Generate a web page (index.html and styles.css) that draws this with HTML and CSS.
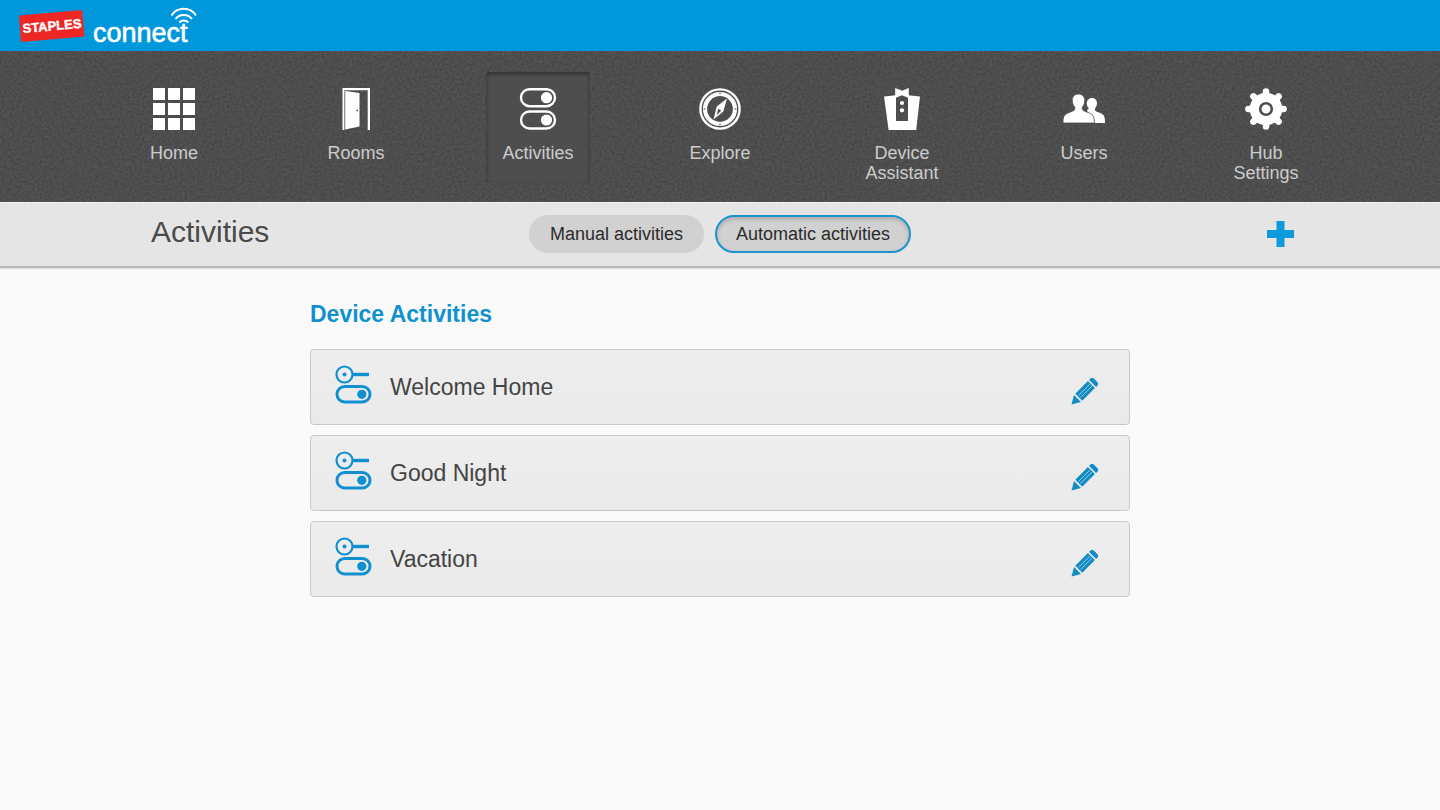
FILE: index.html
```html
<!DOCTYPE html>
<html lang="en">
<head>
    <meta charset="UTF-8">
    <meta name="viewport" content="width=device-width, initial-scale=1.0">
    <title>Staples Connect - Activities</title>
    <link rel="stylesheet" href="styles.css">
</head>
<body>

    <!-- shared icons -->
    <svg class="sprite" width="0" height="0" aria-hidden="true">
        <symbol id="icon-rule" viewBox="0 0 38 40">
            <circle cx="9.500" cy="10.500" r="8" fill="none" stroke="currentColor" stroke-width="2.200"/>
            <circle cx="9.500" cy="10.500" r="2"/>
            <path d="M17.500 8.800h16.500v3.400H17.500z"/>
            <rect x="2" y="22.500" width="33" height="15.500" rx="7.700" fill="none" stroke="currentColor" stroke-width="3"/>
            <circle cx="26.800" cy="30.300" r="4.600"/>
        </symbol>
        <symbol id="icon-pencil" viewBox="0 0 28 28">
            <path d="M0.500 27.500l2.500-9.500 7 7z"/>
            <path d="M4.300 16.700L16.900 4.100l7 7-12.600 12.600z"/>
            <path d="M18.100 2.900l1.600-1.600q1.400-1.200 2.900 0l4.100 4.100q1.200 1.400 0 2.900l-1.600 1.600z"/>
            <path d="M7.500 18.500L19 7M9.500 20.500L21 9" fill="none" stroke="#8cc8e8" stroke-width="1"/>
        </symbol>
    </svg>

    <header class="top-bar">
        <a class="logo" href="#" aria-label="Staples Connect">
            <svg width="200" height="51" viewBox="0 0 200 51">
                <path d="M19 15.500L82 10l2.500 26.500L21 42z" fill="#ee2724"/>
                <text class="logo-staples" x="23" y="33" transform="rotate(-5 23 33)">STAPLES</text>
                <text class="logo-connect" x="93" y="42">connect</text>
                <g fill="none" stroke="#fff" stroke-width="2">
                    <path d="M171.500 15.500a14.500 14.500 0 0 1 24.500 0"/>
                    <path d="M175.500 19a10.500 10.500 0 0 1 16.500 0"/>
                    <path d="M179.300 22.500a6 6 0 0 1 9 0"/>
                </g>
            </svg>
        </a>
    </header>

    <nav class="main-nav">
        <svg class="grain" aria-hidden="true">
            <filter id="noise">
                <feTurbulence type="fractalNoise" baseFrequency="0.4" numOctaves="2"/>
                <feColorMatrix values="0 0 0 0 0  0 0 0 0 0  0 0 0 0 0  0.35 0 0 0 -0.1"/>
            </filter>
            <rect width="100%" height="100%" filter="url(#noise)"/>
        </svg>
        <ul class="nav-list">
            <li>
                <a href="#">
                    <svg viewBox="0 0 42 42">
                        <path d="M0 0h12v12H0zM15 0h12v12H15zM30 0h12v12H30zM0 15h12v12H0zM15 15h12v12H15zM30 15h12v12H30zM0 30h12v12H0zM15 30h12v12H15zM30 30h12v12H30z"/>
                    </svg>
                    <span>Home</span>
                </a>
            </li>
            <li>
                <a href="#">
                    <svg viewBox="0 0 42 42">
                        <path d="M7.500 0h27.500v42h-2.300V2.200H9.400V42H7.500z"/>
                        <path fill-rule="evenodd" d="M10.200 3L24.500 5v33.500l-14.300 2.900zM21.400 22.500a.8 1.100 0 1 0 1.600 0a.8 1.100 0 1 0-1.600 0z"/>
                    </svg>
                    <span>Rooms</span>
                </a>
            </li>
            <li>
                <a class="active" href="#" aria-current="page">
                    <svg viewBox="0 0 42 42">
                        <rect x="4" y="1.200" width="34" height="17" rx="8.500" fill="none" stroke="#fff" stroke-width="2.400"/>
                        <circle cx="29.500" cy="9.700" r="5.600"/>
                        <rect x="4" y="23.500" width="34" height="17" rx="8.500" fill="none" stroke="#fff" stroke-width="2.400"/>
                        <circle cx="29.500" cy="32" r="5.600"/>
                    </svg>
                    <span>Activities</span>
                </a>
            </li>
            <li>
                <a href="#">
                    <svg viewBox="0 0 42 42">
                        <circle cx="21" cy="21" r="19.600" fill="none" stroke="#fff" stroke-width="2.400"/>
                        <circle cx="21" cy="21" r="15" fill="none" stroke="#fff" stroke-width="4.200"/>
                        <path d="M21 4.500v2M21 35.500v2M4.500 21h2M35.500 21h2" stroke="#4d4d4d"/>
                        <path fill-rule="evenodd" d="M28 10.500L24.300 23.500 14.500 31.500l3.200-13zM19.300 20.500l-1.600 6.500 4.500-4.200z"/>
                    </svg>
                    <span>Explore</span>
                </a>
            </li>
            <li>
                <a href="#">
                    <svg viewBox="0 0 42 42">
                        <path d="M3 8.500l12-1.200v25.700h12v-25.700L39 8.500 35.200 42H7.600z"/>
                        <path d="M14.200 0L21 2.800 27.800 0v10L21 7.200 14.200 10z"/>
                        <circle cx="21" cy="15" r="2.100"/>
                        <circle cx="21" cy="22.300" r="2.100"/>
                    </svg>
                    <span>Device<br>Assistant</span>
                </a>
            </li>
            <li>
                <a href="#">
                    <svg viewBox="0 0 42 42">
                        <path d="M29 10c3.300 0 5.200 2.500 5 5.600-.2 2.400-1 3.800-2 4.800v2c1 1.800 8.500 2 9.500 6.600.4 2 .5 4 .5 6H28l-4-13 2-1.700c-1.400-1.200-2.200-3-2.200-4.900 0-3 2-5.400 5.200-5.400z"/>
                        <path d="M15.500 6c4.200 0 6.500 3 6.200 7-.2 2.800-1 4.700-2.400 6v2.500c1.300 2.500 9.700 2.700 11.400 7.500.5 1.700.7 4.200.7 6H0c0-2 0-4.300.6-6 1.800-4.800 9.800-5 11.200-7.500v-2.500c-1.400-1.300-2.300-3.200-2.500-6-.3-4 2-7 6.200-7z" stroke="#4d4d4d" stroke-width=".8"/>
                    </svg>
                    <span>Users</span>
                </a>
            </li>
            <li>
                <a href="#">
                    <svg viewBox="0 0 42 42">
                        <circle cx="21" cy="21" r="16.300"/>
                        <g stroke="#fff" stroke-width="6.500" stroke-linecap="round">
                            <path d="M21 3.400v35.200M3.400 21h35.200M8.400 8.400l25.200 25.200M33.600 8.400L8.400 33.600"/>
                        </g>
                        <circle cx="21" cy="21" r="5.800" stroke="#4d4d4d" stroke-width="2.600"/>
                    </svg>
                    <span>Hub<br>Settings</span>
                </a>
            </li>
        </ul>
    </nav>

    <div class="sub-bar">
        <div class="sub-inner">
            <h1>Activities</h1>
            <div class="filters">
                <button type="button" class="pill">Manual activities</button>
                <button type="button" class="pill selected" aria-pressed="true">Automatic activities</button>
            </div>
            <button type="button" class="add-btn" aria-label="Add activity">
                <svg width="27" height="26" viewBox="0 0 27 26">
                    <path d="M9.500 0h8v9H27v8h-9.500v9h-8v-9H0V9h9.500z"/>
                </svg>
            </button>
        </div>
    </div>

    <main class="content">
        <h2>Device Activities</h2>
        <ul class="activity-list">
            <li class="activity">
                <svg class="rule-icon"><use href="#icon-rule"/></svg>
                <span class="name">Welcome Home</span>
                <button type="button" class="edit-btn" aria-label="Edit Welcome Home"><svg><use href="#icon-pencil"/></svg></button>
            </li>
            <li class="activity">
                <svg class="rule-icon"><use href="#icon-rule"/></svg>
                <span class="name">Good Night</span>
                <button type="button" class="edit-btn" aria-label="Edit Good Night"><svg><use href="#icon-pencil"/></svg></button>
            </li>
            <li class="activity">
                <svg class="rule-icon"><use href="#icon-rule"/></svg>
                <span class="name">Vacation</span>
                <button type="button" class="edit-btn" aria-label="Edit Vacation"><svg><use href="#icon-pencil"/></svg></button>
            </li>
        </ul>
    </main>

</body>
</html>
```
FILE: styles.css
```css
* {
    box-sizing: border-box;
}

body {
    font-family: "Liberation Sans", Arial, sans-serif;
    font-size: 18px;
    line-height: 20px;
    background-color: #fafafa;
    color: #444;
    margin: 0;
}

ul {
    list-style: none;
    margin: 0;
    padding: 0;
}

button {
    font: inherit;
    border: none;
    background: none;
    padding: 0;
    cursor: pointer;
}

svg {
    display: block;
}

.sprite {
    position: absolute;
}

/* Top bar */
.top-bar {
    background: #0097db;
}

.logo {
    display: inline-block;
    vertical-align: top;
}

.logo-staples {
    font-size: 13px;
    font-weight: bold;
    fill: #fff;
    stroke: #fff;
    stroke-width: 0.4px;
}

.logo-connect {
    font-size: 27px;
    fill: #fff;
    stroke: #fff;
    stroke-width: 0.6px;
}

/* Navigation */
.main-nav {
    position: relative;
    background: #545454;
    padding: 21px 20px 19px;
}

.grain {
    position: absolute;
    top: 0;
    left: 0;
    width: 100%;
    height: 100%;
}

.nav-list {
    position: relative;
    display: grid;
    grid-template-columns: repeat(7, 1fr);
    max-width: 1274px;
    margin: 0 auto;
}

.nav-list a {
    display: flex;
    flex-direction: column;
    align-items: center;
    gap: 13px;
    width: 104px;
    min-height: 111px;
    margin: 0 auto;
    padding-top: 16px;
    color: #ccc;
    text-align: center;
    text-decoration: none;
    border-radius: 3px;
}

.nav-list a.active {
    background: #4e4e4e;
    box-shadow: inset 0 2px 4px rgba(0, 0, 0, 0.4);
}

.nav-list svg {
    width: 42px;
    height: 42px;
    fill: #fff;
}

/* Sub bar */
.sub-bar {
    background: #e5e5e5;
    border-top: 1px solid #f2f2f2;
    border-bottom: 2px solid #b8b8b8;
    box-shadow: 0 1px 2px rgba(0, 0, 0, 0.15);
    padding: 12px 20px 13px;
}

.sub-inner {
    display: grid;
    grid-template-columns: 1fr auto 1fr;
    align-items: center;
    max-width: 1148px;
    margin: 0 auto;
}

h1 {
    margin: 0;
    padding: 0 5px 4px;
    font-size: 30px;
    line-height: 34px;
    font-weight: normal;
    color: #4a4a4a;
}

.filters {
    display: flex;
    gap: 11px;
}

.pill {
    height: 38px;
    padding: 0 21px;
    border-radius: 19px;
    background: #d1d1d1;
    color: #2b2b2b;
}

.pill.selected {
    border: 2px solid #1b93cc;
    padding: 0 19px;
    box-shadow: inset 0 2px 4px rgba(0, 0, 0, 0.2);
}

.add-btn {
    justify-self: end;
    fill: #0e9adb;
}

/* Activities */
.content {
    max-width: 820px;
    margin: 0 auto;
    padding: 32px 0;
}

h2 {
    margin: 0 0 21px;
    font-size: 23px;
    line-height: 28px;
    color: #0f91cf;
}

.activity-list {
    display: grid;
    gap: 10px;
}

.activity {
    display: flex;
    align-items: center;
    height: 76px;
    padding: 0 30px 0 24px;
    background: linear-gradient(#eeeeee, #eaeaea);
    border: 1px solid #c9c9c9;
    border-radius: 4px;
}

.rule-icon {
    width: 38px;
    height: 40px;
    margin-bottom: 6px;
    color: #1090d0;
    fill: currentColor;
}

.name {
    flex: 1;
    padding-left: 17px;
    font-size: 23px;
    line-height: 28px;
}

.edit-btn {
    padding-top: 8px;
    fill: #158bc4;
}

.edit-btn svg {
    width: 28px;
    height: 28px;
}
```
